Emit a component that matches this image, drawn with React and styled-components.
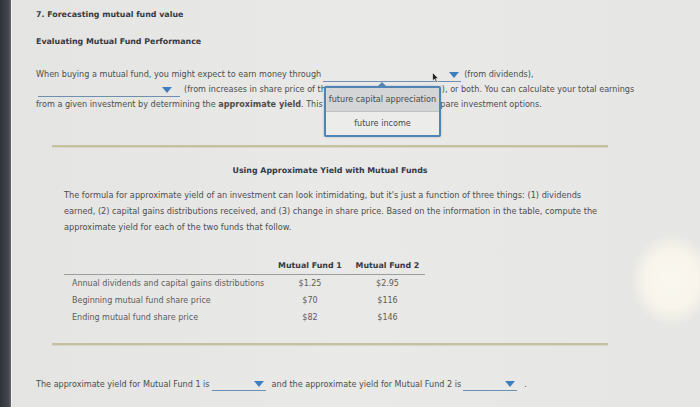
import React from "react";
import styled, { createGlobalStyle } from "styled-components";

const Global = createGlobalStyle`
  html, body {
    margin: 0;
    padding: 0;
    background: #e7e7e5;
  }
  body {
    font-family: "DejaVu Sans", Verdana, sans-serif;
  }
`;

const Page = styled.div`
  position: relative;
  width: 700px;
  height: 407px;
  display: flex;
  overflow: hidden;
  background:
    radial-gradient(ellipse 42px 46px at 672px 280px, rgba(251, 248, 240, 1) 0%, rgba(249, 245, 235, 0.96) 62%, rgba(238, 237, 233, 0) 100%),
    linear-gradient(90deg, #e4e4e2 0%, #e9e9e7 50%, #e6e6e4 100%);
`;

const Bezel = styled.div`
  width: 11px;
  flex-shrink: 0;
  background: linear-gradient(90deg, #2f3238 0%, #454850 80%, #6b6e74 100%);
  border-right: 1px solid #f2f2f0;
`;

const Content = styled.div`
  flex: 1;
  padding: 8px 0 0 24px;
  color: #4d4d4d;
  font-size: 8.1px;
`;

const Title = styled.div`
  font-weight: bold;
  font-size: 7.9px;
  line-height: 14px;
  color: #353a45;
`;

const Subtitle = styled(Title)`
  margin-top: 13px;
`;

const Para = styled.div`
  position: relative;
  margin-top: 17.5px;
  line-height: 15px;
  white-space: nowrap;
`;

const Blank = styled.span`
  position: relative;
  display: inline-block;
  vertical-align: bottom;
  width: ${(p) => p.$w}px;
  height: 12px;
  margin: 0 ${(p) => p.$gap ?? 3}px 0 2px;
  border-bottom: 1px solid #6d8fb1;
  svg {
    position: absolute;
    right: ${(p) => p.$arrow ?? 4}px;
    top: 3px;
  }
`;

const Covered = styled.span`
  display: inline-block;
  vertical-align: bottom;
  width: ${(p) => p.$w}px;
  overflow: hidden;
  visibility: hidden;
`;

const Popup = styled.div`
  position: absolute;
  left: 288px;
  top: 19px;
  width: 113px;
  background: #ebebea;
  border: 2px solid #4f84b4;
  border-radius: 2px;
  box-shadow: 0 0 2px rgba(60, 100, 140, 0.4);
  z-index: 2;
`;

const Caret = styled.div`
  position: absolute;
  left: 51px;
  top: -6px;
  width: 0;
  height: 0;
  border-left: 5px solid transparent;
  border-right: 5px solid transparent;
  border-bottom: 5px solid #4f84b4;
`;

const Option = styled.div`
  height: 23px;
  line-height: 23px;
  text-align: center;
  color: #4a4a4a;
  background: ${(p) => (p.$active ? "#d3d5d7" : "#ececeb")};
  border-bottom: ${(p) => (p.$active ? "1px solid #bfc2c5" : "none")};
`;

const Pointer = styled.svg`
  position: absolute;
  left: 396px;
  top: 5px;
  z-index: 3;
`;

const Section = styled.div`
  width: 556px;
  margin-left: 16px;
`;

const Rule = styled.div`
  margin-top: ${(p) => p.$top}px;
  height: 2px;
  background: #c5c09f;
  border-bottom: 1px solid #d9d6c4;
`;

const Heading = styled.div`
  margin-top: 16px;
  text-align: center;
  font-weight: bold;
  font-size: 7.9px;
  line-height: 14px;
  color: #353a45;
`;

const Body = styled.div`
  margin-top: 9px;
  padding-left: 12px;
  font-size: 8.2px;
  line-height: 16px;
  white-space: nowrap;
`;

const Table = styled.div`
  margin: 23px 0 0 12px;
  width: 361px;
`;

const Row = styled.div`
  display: grid;
  grid-template-columns: 206px 80px 75px;
  height: ${(p) => (p.$head ? 16 : 17)}px;
  align-items: center;
  border-bottom: ${(p) => (p.$head ? "1px solid #9a9ea3" : "none")};
  font-weight: ${(p) => (p.$head ? "bold" : "normal")};
  font-size: ${(p) => (p.$head ? "7.9px" : "8px")};
  color: ${(p) => (p.$head ? "#353a45" : "#5c5c5c")};
`;

const Label = styled.div`
  padding-left: 8px;
`;

const Cell = styled.div`
  text-align: center;
`;

const Answer = styled.div`
  margin-top: 31px;
  line-height: 14px;
  white-space: nowrap;
`;

const Arrow = () => (
  <svg width="10" height="6" viewBox="0 0 10 6">
    <path d="M0 0 L10 0 L5 6 Z" fill="#3f7fc1" />
  </svg>
);

const rows = [
  ["Annual dividends and capital gains distributions", "$1.25", "$2.95"],
  ["Beginning mutual fund share price", "$70", "$116"],
  ["Ending mutual fund share price", "$82", "$146"],
];

const App = () => {
  return (
    <Page>
      <Global />
      <Bezel />
      <Content>
        <Title>7. Forecasting mutual fund value</Title>
        <Subtitle>Evaluating Mutual Fund Performance</Subtitle>

        <Para>
          When buying a mutual fund, you might expect to earn money through
          <Blank $w={138} $arrow={2}>
            <Arrow />
          </Blank>
          (from dividends),
          <br />
          <Blank $w={142} $gap={4} $arrow={8}>
            <Arrow />
          </Blank>
          (from increases in share price of th
          <Covered $w={116}>e fund&apos;s holdings</Covered>
          ), or both. You can calculate your total earnings
          <br />
          from a given investment by determining the <b>approximate yield</b>. This{" "}
          <Covered $w={115}>yield can help you com</Covered>
          pare investment options.
          <Popup>
            <Caret />
            <Option $active>future capital appreciation</Option>
            <Option>future income</Option>
          </Popup>
          <Pointer width="7" height="11" viewBox="0 0 7 11">
            <path d="M0.5 0.5 L0.5 9 L2.5 7 L4 10.5 L5.3 10 L3.8 6.6 L6.5 6.6 Z" fill="#222" stroke="#fff" strokeWidth="0.6" />
          </Pointer>
        </Para>

        <Section>
          <Rule $top={33} />
          <Heading>Using Approximate Yield with Mutual Funds</Heading>
          <Body>
            The formula for approximate yield of an investment can look intimidating, but it&apos;s just a function of three things: (1) dividends
            <br />
            earned, (2) capital gains distributions received, and (3) change in share price. Based on the information in the table, compute the
            <br />
            approximate yield for each of the two funds that follow.
          </Body>
          <Table>
            <Row $head>
              <Label />
              <Cell>Mutual Fund 1</Cell>
              <Cell>Mutual Fund 2</Cell>
            </Row>
            {rows.map((r) => (
              <Row key={r[0]}>
                <Label>{r[0]}</Label>
                <Cell>{r[1]}</Cell>
                <Cell>{r[2]}</Cell>
              </Row>
            ))}
          </Table>
          <Rule $top={17} />
        </Section>

        <Answer>
          The approximate yield for Mutual Fund 1 is
          <Blank $w={54} $arrow={2} $gap={6}>
            <Arrow />
          </Blank>
          and the approximate yield for Mutual Fund 2 is
          <Blank $w={54} $arrow={2} $gap={7}>
            <Arrow />
          </Blank>
          .
        </Answer>
      </Content>
    </Page>
  );
};

export default App;
